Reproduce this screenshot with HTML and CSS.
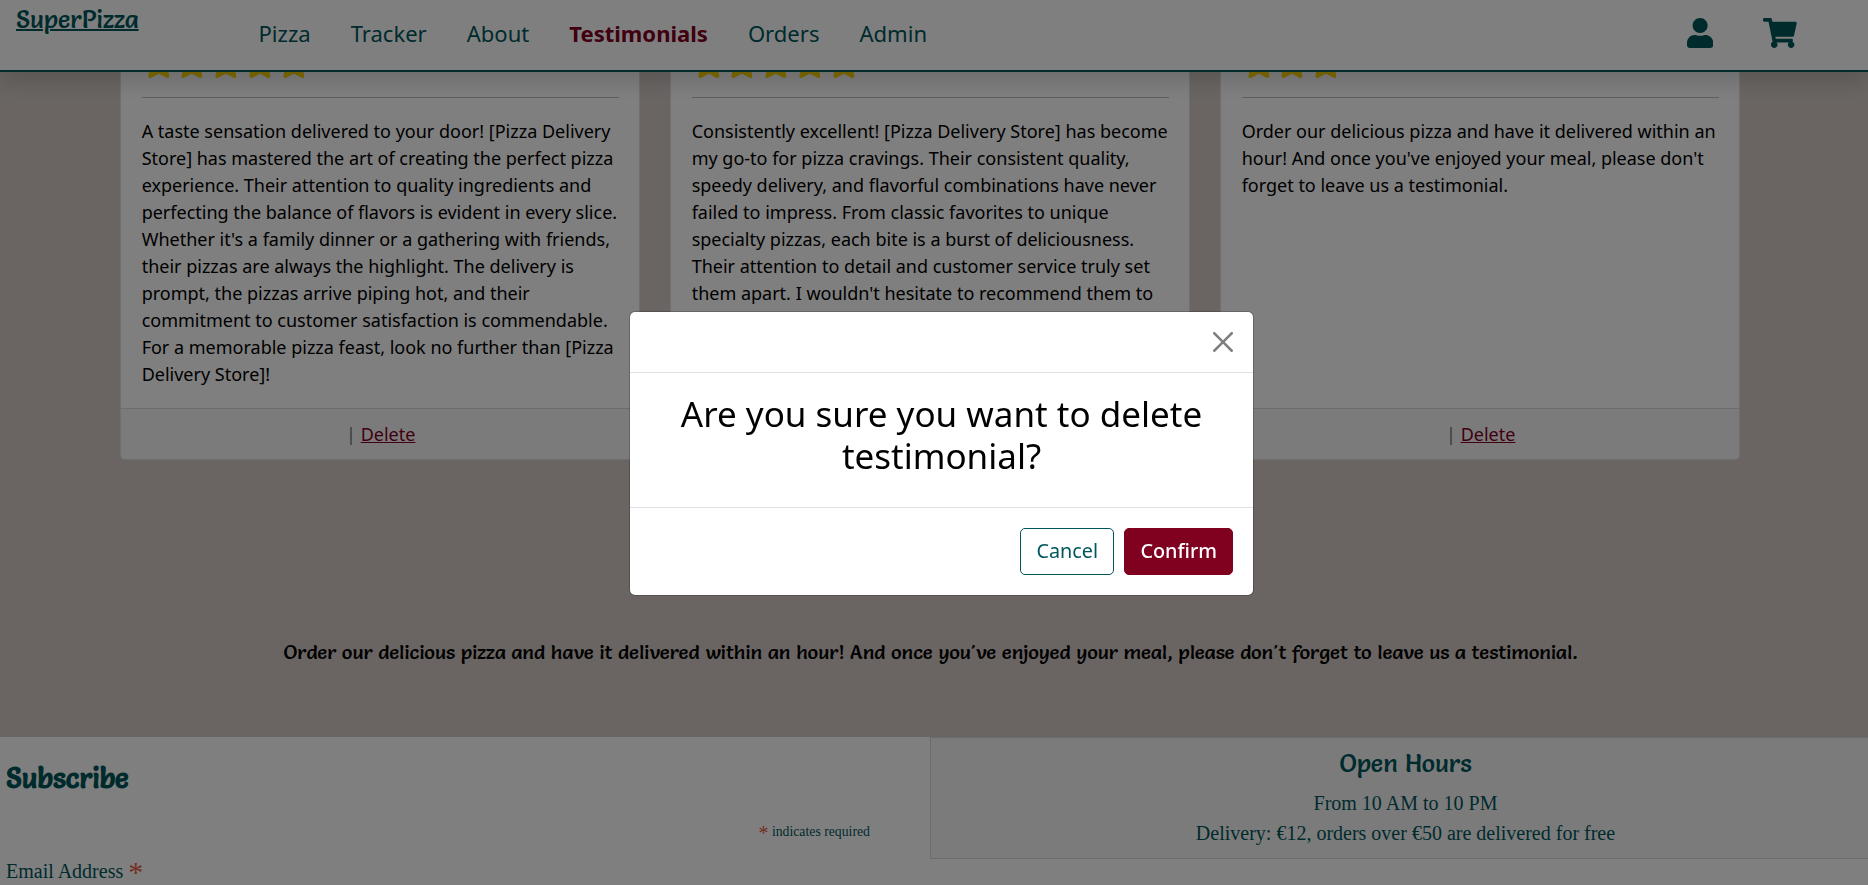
FILE: index.html
```html
<!DOCTYPE html>
<html lang="en">
<head>
<meta charset="utf-8">
<title>SuperPizza - Testimonials</title>
<link rel="stylesheet" href="styles.css">
</head>
<body>
<svg class="sprite" aria-hidden="true">
  <symbol id="star" viewBox="0 0 576 512"><path d="M259.3 17.8L194 150.2 47.9 171.5c-26.2 3.8-36.7 36.1-17.7 54.6l105.7 103-25 145.5c-4.5 26.3 23.2 46 46.4 33.7L288 439.6l130.7 68.7c23.2 12.2 50.9-7.4 46.4-33.7l-25-145.5 105.7-103c19-18.5 8.5-50.8-17.7-54.6L382 150.2 316.7 17.8c-11.7-23.6-45.6-23.9-57.4 0z"/></symbol>
</svg>

<header class="header">
  <a class="logo display" href="#">SuperPizza</a>
  <nav class="nav">
    <a href="#">Pizza</a>
    <a href="#">Tracker</a>
    <a href="#">About</a>
    <a class="active" href="#">Testimonials</a>
    <a href="#">Orders</a>
    <a href="#">Admin</a>
  </nav>
  <div class="header-icons">
    <svg class="icon-user" viewBox="0 0 448 512"><path d="M224 256c70.7 0 128-57.3 128-128S294.7 0 224 0 96 57.3 96 128s57.3 128 128 128zm89.6 32h-16.7c-22.2 10.2-46.9 16-72.9 16s-50.6-5.8-72.9-16h-16.7C60.2 288 0 348.2 0 422.4V464c0 26.5 21.5 48 48 48h352c26.5 0 48-21.5 48-48v-41.6c0-74.2-60.2-134.4-134.4-134.4z"/></svg>
    <svg class="icon-cart" viewBox="0 0 576 512"><path d="M528.12 301.319l47.273-208C578.806 78.301 567.391 64 551.99 64H159.208l-9.166-44.81C147.758 8.021 137.93 0 126.529 0H24C10.745 0 0 10.745 0 24v16c0 13.255 10.745 24 24 24h69.883l70.248 343.435C147.325 417.1 136 435.222 136 456c0 30.928 25.072 56 56 56s56-25.072 56-56c0-15.674-6.447-29.835-16.824-40h209.647C430.447 426.165 424 440.326 424 456c0 30.928 25.072 56 56 56s56-25.072 56-56c0-22.172-12.888-41.332-31.579-50.405l5.517-24.276c3.413-15.018-8.002-29.319-23.403-29.319H218.117l-6.545-32h293.145c11.206 0 20.92-7.754 23.403-18.681z"/></svg>
  </div>
</header>

<main class="main">
  <section class="cards">
    <article class="card">
      <div class="card-body">
        <div class="stars"><svg><use href="#star"/></svg><svg><use href="#star"/></svg><svg><use href="#star"/></svg><svg><use href="#star"/></svg><svg><use href="#star"/></svg></div>
        <hr>
        <p>A taste sensation delivered to your door! [Pizza Delivery Store] has mastered the art of creating the perfect pizza experience. Their attention to quality ingredients and perfecting the balance of flavors is evident in every slice. Whether it's a family dinner or a gathering with friends, their pizzas are always the highlight. The delivery is prompt, the pizzas arrive piping hot, and their commitment to customer satisfaction is commendable. For a memorable pizza feast, look no further than [Pizza Delivery Store]!</p>
      </div>
      <div class="card-footer">| <a href="#">Delete</a></div>
    </article>
    <article class="card">
      <div class="card-body">
        <div class="stars"><svg><use href="#star"/></svg><svg><use href="#star"/></svg><svg><use href="#star"/></svg><svg><use href="#star"/></svg><svg><use href="#star"/></svg></div>
        <hr>
        <p>Consistently excellent! [Pizza Delivery Store] has become my go-to for pizza cravings. Their consistent quality, speedy delivery, and flavorful combinations have never failed to impress. From classic favorites to unique specialty pizzas, each bite is a burst of deliciousness. Their attention to detail and customer service truly set them apart. I wouldn't hesitate to recommend them to</p>
      </div>
      <div class="card-footer"></div>
    </article>
    <article class="card">
      <div class="card-body">
        <div class="stars"><svg><use href="#star"/></svg><svg><use href="#star"/></svg><svg><use href="#star"/></svg></div>
        <hr>
        <p>Order our delicious pizza and have it delivered within an hour! And once you've enjoyed your meal, please don't forget to leave us a testimonial.</p>
      </div>
      <div class="card-footer">| <a href="#">Delete</a></div>
    </article>
  </section>
  <p class="callout display">Order our delicious pizza and have it delivered within an hour! And once you've enjoyed your meal, please don't forget to leave us a testimonial.</p>
</main>

<footer class="footer">
  <section class="subscribe">
    <h2 class="display">Subscribe</h2>
    <div class="required-note"><span class="asterisk">*</span> indicates required</div>
    <label>Email Address <span class="asterisk">*</span></label>
  </section>
  <section class="hours">
    <h3 class="display">Open Hours</h3>
    <p>From 10 AM to 10 PM</p>
    <p>Delivery: €12, orders over €50 are delivered for free</p>
  </section>
</footer>

<div class="backdrop"></div>
<div class="modal" role="dialog">
  <div class="modal-header">
    <svg class="close" viewBox="0 0 16 16"><path d="M.293.293a1 1 0 0 1 1.414 0L8 6.586 14.293.293a1 1 0 1 1 1.414 1.414L9.414 8l6.293 6.293a1 1 0 0 1-1.414 1.414L8 9.414l-6.293 6.293a1 1 0 0 1-1.414-1.414L6.586 8 .293 1.707a1 1 0 0 1 0-1.414z"/></svg>
  </div>
  <div class="modal-body">Are you sure you want to delete testimonial?</div>
  <div class="modal-footer">
    <button class="btn btn-cancel">Cancel</button>
    <button class="btn btn-confirm">Confirm</button>
  </div>
</div>
</body>
</html>
```

FILE: styles.css
```css
* { box-sizing: border-box; }
html { height: 885px; overflow: hidden; }
body {
  margin: 0;
  height: 885px;
  overflow: hidden;
  display: flex;
  flex-direction: column;
  background: #d4cbc7;
  color: #000;
  font-family: "Noto Sans", sans-serif;
  font-size: 18px;
  line-height: 27px;
}
p, h2, h3 { margin: 0; }
.sprite { display: none; }
.display { font-family: Salsa, Lato, sans-serif; }

.header {
  position: relative;
  z-index: 1;
  flex: none;
  height: 72px;
  display: flex;
  background: #fff;
  border-bottom: 2px solid #00565b;
  box-shadow: 0 10px 20px rgba(0, 0, 0, .15);
}
.logo {
  width: 222.5px;
  padding: 4px 0 0 16px;
  color: #00565b;
  font-size: 25px;
  line-height: 30px;
  text-decoration-thickness: 2px;
}
.nav { display: flex; padding: 17px 16px 0; }
.nav a {
  padding: 0 20px;
  color: #00565b;
  font-size: 22.05px;
  line-height: 33px;
  text-decoration: none;
}
.nav .active { color: #80001f; font-weight: 700; }
.header-icons {
  display: flex;
  gap: 49.5px;
  margin-left: auto;
  padding: 18px 71.5px 0 0;
  fill: #00565b;
}
.icon-user { width: 26.25px; height: 30px; }
.icon-cart { width: 33.75px; height: 30px; }

.main { flex: none; height: 665px; width: 1861px; }
.cards {
  display: grid;
  grid-template-columns: repeat(3, 519.5px);
  gap: 30.5px;
  margin: -45px 0 0 120.25px;
  height: 432.5px;
}
.card {
  display: flex;
  flex-direction: column;
  background: #fff;
  border: 1px solid rgba(0, 0, 0, .125);
  border-radius: 5px;
  overflow: hidden;
}
.card-body { flex: 1; padding: 20px 20px 0 20.4px; }
.stars { display: flex; height: 30px; }
.stars svg { width: 33.75px; height: 30px; fill: gold; }
.card hr { height: 1px; margin: 19px 0 20px; border: 0; background: #000; opacity: .25; }
.card-footer {
  height: 51px;
  padding: 12.5px 0 0 1.5px;
  border-top: 1px solid rgba(0, 0, 0, .125);
  background: rgba(0, 0, 0, .03);
  color: #6c757d;
  text-align: center;
}
.card-footer a { color: #80001f; }
.callout {
  padding-top: 177px;
  text-align: center;
  font-size: 20px;
  line-height: 30px;
  white-space: nowrap;
}

.footer {
  flex: none;
  height: 148px;
  display: grid;
  grid-template-columns: 930px 951px;
  align-items: start;
  background: #fff;
  color: #00565b;
  font-family: "Liberation Serif", serif;
  font-size: 20px;
  line-height: 30px;
}
.subscribe { padding: 23px 60px 0 6px; }
.subscribe h2 { font-size: 28px; line-height: 36px; font-weight: 700; }
.required-note { margin-top: 25px; text-align: right; font-size: 13.75px; line-height: 21px; }
.subscribe label { display: block; margin-top: 14px; }
.asterisk { color: #e85c41; font-size: 1.5em; line-height: 0; vertical-align: -.13em; }
.required-note .asterisk { font-size: 1.45em; vertical-align: -.22em; }
.hours {
  height: 122px;
  padding-top: 10px;
  border: 1px solid rgba(0, 0, 0, .125);
  background: #f7f7f7;
  text-align: center;
}
.hours h3 { font-size: 25px; line-height: 30px; font-weight: 500; margin-bottom: 10px; }

.backdrop { position: fixed; inset: 0; z-index: 2; background: rgba(0, 0, 0, .5); }
.modal {
  position: fixed;
  z-index: 3;
  left: 629px;
  top: 311px;
  width: 625px;
  height: 285px;
  display: flex;
  flex-direction: column;
  border: 1px solid rgba(0, 0, 0, .2);
  border-radius: 6px;
  background: #fff;
  background-clip: padding-box;
}
.modal-header {
  height: 61px;
  display: flex;
  justify-content: flex-end;
  padding: 20px;
  border-bottom: 1px solid #dee2e6;
}
.close { width: 20px; height: 20px; opacity: .5; }
.modal-body {
  height: 134px;
  padding: 20px;
  font-size: 35px;
  line-height: 42px;
  text-align: center;
}
.modal-footer {
  flex: 1;
  display: flex;
  align-items: flex-start;
  justify-content: flex-end;
  gap: 10px;
  padding: 20px;
  border-top: 1px solid #dee2e6;
}
.btn {
  height: 47px;
  padding: 0 15.4px 1px;
  border: 1px solid #00565b;
  border-radius: 5px;
  background: #fff;
  color: #00565b;
  font: 19.8px/44px "Noto Sans", sans-serif;
}
.btn-confirm { padding: 0 15px 1px; border-color: #80001f; background: #80001f; color: #fff; font-weight: 500; }
```
